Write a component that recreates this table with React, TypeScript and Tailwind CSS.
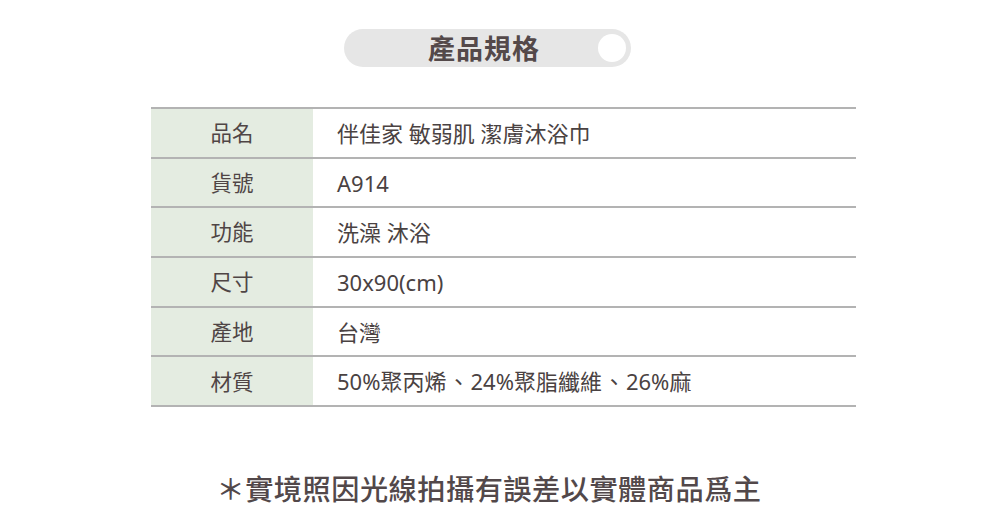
const rows: [string, string][] = [
  ["品名", "伴佳家 敏弱肌 潔膚沐浴巾"],
  ["貨號", "A914"],
  ["功能", "洗澡 沐浴"],
  ["尺寸", "30x90(cm)"],
  ["產地", "台灣"],
  ["材質", "50%聚丙烯、24%聚脂纖維、26%麻"],
];

// give the ideographic comma a little breathing room, like the source artwork
function Value({ text }: { text: string }) {
  const parts = text.split("、");
  return (
    <>
      {parts.map((p, i) => (
        <span key={i}>
          {p}
          {i < parts.length - 1 && <span className="mx-[1px]">、</span>}
        </span>
      ))}
    </>
  );
}

export default function App() {
  return (
    <div
      className="flex h-[526px] w-[1000px] flex-col items-center bg-white text-[#4f4545]"
      style={{ fontFamily: '"Noto Sans", "Noto Sans CJK TC", sans-serif' }}
    >
      {/* Title pill */}
      <div className="mr-[25px] mt-[29px] flex h-[38px] w-[287px] items-center rounded-full bg-[#e6e6e6] pl-[84px] pr-[5px]">
        <span className="text-[27px] font-bold leading-none tracking-[1px] text-[#54494a]">
          產品規格
        </span>
        <span className="ml-auto h-[28px] w-[28px] rounded-full bg-white" />
      </div>

      {/* Spec table */}
      <div className="ml-[7px] mt-[40px] w-[705px] border-t-2 border-[#b3b3b3]">
        {rows.map(([label, value]) => (
          <div key={label} className="flex h-[49.7px] border-b-2 border-[#b3b3b3]">
            <div className="flex w-[162px] items-center justify-center bg-[#e4ece1] text-[21.5px] leading-none">
              {label}
            </div>
            <div className="flex items-center pl-[24px] text-[22px] leading-none text-[#4a4242]">
              <Value text={value} />
            </div>
          </div>
        ))}
      </div>

      {/* Footnote */}
      <div className="mr-[22px] mt-[68px] text-[28.2px] font-medium leading-none tracking-[0.5px] text-[#52484a]">
        ＊實境照因光線拍攝有誤差以實體商品爲主
      </div>
    </div>
  );
}
